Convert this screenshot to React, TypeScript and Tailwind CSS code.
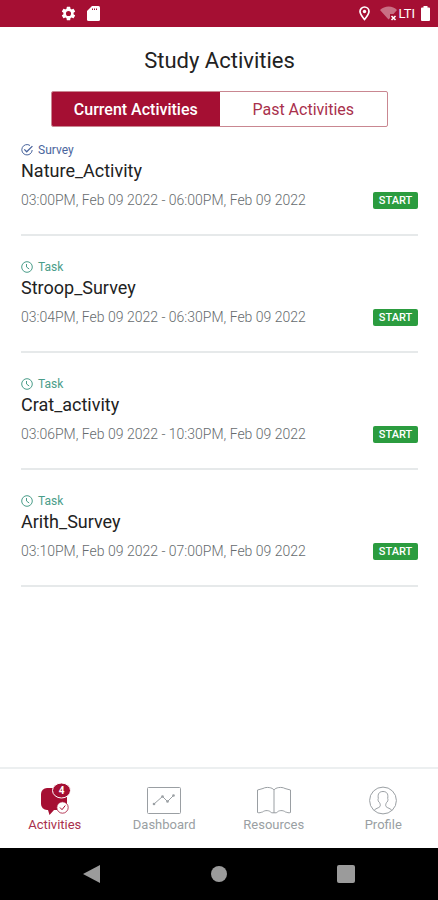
import { useState } from "react"

type Activity = {
  id: number
  kind: "Survey" | "Task"
  name: string
  period: string
}

const ACTIVITIES: Activity[] = [
  { id: 1, kind: "Survey", name: "Nature_Activity", period: "03:00PM, Feb 09 2022 - 06:00PM, Feb 09 2022" },
  { id: 2, kind: "Task", name: "Stroop_Survey", period: "03:04PM, Feb 09 2022 - 06:30PM, Feb 09 2022" },
  { id: 3, kind: "Task", name: "Crat_activity", period: "03:06PM, Feb 09 2022 - 10:30PM, Feb 09 2022" },
  { id: 4, kind: "Task", name: "Arith_Survey", period: "03:10PM, Feb 09 2022 - 07:00PM, Feb 09 2022" },
]

const TABS = ["Current Activities", "Past Activities"]

function StatusBar() {
  return (
    <div className="h-[27px] bg-[#a50f33] flex items-center justify-between text-white">
      <div className="flex items-center gap-[10px] pl-[60px]">
        <svg className="w-[17px] h-[17px]" viewBox="0 0 24 24" fill="currentColor">
          <path d="M19.14 12.94c.04-.3.06-.61.06-.94s-.02-.64-.07-.94l2.03-1.58a.49.49 0 0 0 .12-.61l-1.92-3.32a.49.49 0 0 0-.59-.22l-2.39.96a7 7 0 0 0-1.62-.94l-.36-2.54A.48.48 0 0 0 13.92 2.4h-3.84a.48.48 0 0 0-.48.41l-.36 2.54c-.59.24-1.13.57-1.62.94l-2.39-.96a.49.49 0 0 0-.59.22L2.72 8.87c-.12.21-.08.47.12.61l2.03 1.58c-.05.3-.07.62-.07.94s.02.64.07.94l-2.03 1.58a.49.49 0 0 0-.12.61l1.92 3.32c.12.22.37.29.59.22l2.39-.96c.5.38 1.03.7 1.62.94l.36 2.54c.05.24.24.41.48.41h3.84c.24 0 .44-.17.47-.41l.36-2.54a7 7 0 0 0 1.62-.94l2.39.96c.22.08.47 0 .59-.22l1.92-3.32a.49.49 0 0 0-.12-.61zM12 15.6a3.6 3.6 0 1 1 0-7.2 3.6 3.6 0 0 1 0 7.2z" />
        </svg>
        <svg className="w-[13px] h-[15px]" viewBox="0 0 13 15">
          <path d="M5 0h6.5A1.5 1.5 0 0 1 13 1.5v12a1.5 1.5 0 0 1-1.5 1.5h-10A1.5 1.5 0 0 1 0 13.5V5z" fill="currentColor" />
          <path d="M5.5 2.5V4M7.5 2.5V4M9.5 2.5V4" stroke="#a50f33" strokeWidth="1" />
        </svg>
      </div>
      <div className="flex items-center pr-2">
        <svg className="w-[11px] h-[15px] mr-[10px]" viewBox="0 0 11 15" fill="none" stroke="currentColor">
          <path d="M5.5 13.5C3 10.500 1 8 1 5.500a4.500 4.500 0 0 1 9 0c0 2.500-2 5-4.500 8z" strokeWidth="1.700" />
          <circle cx="5.500" cy="5.500" r="1.700" fill="currentColor" stroke="none" />
        </svg>
        <svg className="w-[18px] h-[15px]" viewBox="0 0 18 15">
          <path d="M0 4C4.500-.7 13-.7 17 4l-3.500 4H10v4l-1.500 1.500z" fill="#fff" opacity=".4" />
          <path d="m11.500 10 4 4m0-4-4 4" stroke="#fff" strokeWidth="1.600" />
        </svg>
        <span className="text-[13px] leading-4 mr-1.5">LTI</span>
        <svg className="w-[9px] h-[15px]" viewBox="0 0 9 15" fill="currentColor">
          <path d="M2.500 0h4v1.500H8a1 1 0 0 1 1 1V14a1 1 0 0 1-1 1H1a1 1 0 0 1-1-1V2.500a1 1 0 0 1 1-1h1.500z" />
        </svg>
      </div>
    </div>
  )
}

function KindIcon({ kind }: { kind: Activity["kind"] }) {
  if (kind === "Survey") {
    return (
      <svg className="w-3 h-3" viewBox="0 0 12 12" fill="none" stroke="currentColor">
        <path d="M9 1.500A5.200 5.200 0 1 0 11.200 6" />
        <path d="m3.300 5.400 2.400 2.400 5.700-5.700" strokeWidth="1.300" />
      </svg>
    )
  }
  return (
    <svg className="w-3 h-3" viewBox="0 0 12 12" fill="none" stroke="currentColor">
      <circle cx="6" cy="6" r="5.300" />
      <path d="M5.500 3v3l2.700 2" />
    </svg>
  )
}

function ActivityRow({ activity }: { activity: Activity }) {
  return (
    <li className="border-b-2 border-[#e6e9ea] pb-[25px]">
      <div className={`flex items-center gap-[5px] text-xs ${activity.kind === "Survey" ? "text-[#4a659d]" : "text-[#4a9d89]"}`}>
        <KindIcon kind={activity.kind} />
        <span>{activity.kind}</span>
      </div>
      <h2 className="mt-0.5 text-[18px] leading-[22px] text-[#222]">{activity.name}</h2>
      <div className="mt-[9px] flex items-center justify-between">
        <p className="text-[14px] leading-[18px] font-light text-[#666b6e]">{activity.period}</p>
        <button className="w-[45px] h-[17px] rounded-xs bg-[#2b9c3f] text-white text-[11px] leading-[17px] font-medium">
          START
        </button>
      </div>
    </li>
  )
}

function ActivitiesIcon() {
  return (
    <svg className="w-8 h-8" viewBox="0 0 32 32">
      <path d="M8 5h14a6 6 0 0 1 6 6v10a6 6 0 0 1-6 6h-7l-4.500 5L9 27H8a6 6 0 0 1-6-6V11a6 6 0 0 1 6-6z" fill="#a50f33" />
      <ellipse cx="22.500" cy="7.500" rx="9" ry="7.500" fill="#a50f33" stroke="#fff" />
      <text x="22.500" y="11" textAnchor="middle" fill="#fff" fontSize="10" fontWeight="700">4</text>
      <circle cx="23.500" cy="24.500" r="5.700" fill="#fff" stroke="#a50f33" strokeWidth=".8" />
      <path d="m21 24.500 2 2.200 3.300-4.200" fill="none" stroke="#a50f33" />
    </svg>
  )
}

function DashboardIcon() {
  return (
    <svg className="w-[34px] h-8" viewBox="0 0 34 32" fill="none" stroke="currentColor">
      <rect x=".5" y="4.500" width="33" height="26" rx="1" />
      <path d="m7 21 8.500-7.500 5 5 6-6" />
      <g fill="currentColor" stroke="none">
        <circle cx="7" cy="21" r="1.300" />
        <circle cx="15.500" cy="13.500" r="1.300" />
        <circle cx="20.500" cy="18.500" r="1.300" />
        <circle cx="26.500" cy="12.500" r="1.300" />
      </g>
    </svg>
  )
}

function ResourcesIcon() {
  return (
    <svg className="w-[34px] h-8" viewBox="0 0 34 32" fill="none" stroke="currentColor">
      <path d="M17 7C15.500 4.500 9.500 3.500 6 5.500L.5 7v22.500c2 .8 3.200-.2 5-.5 2.500-2 7-2 9 .8h5c2-2.800 6.500-2.800 9-.8 1.800.3 3 1.300 5 .5V7L28 5.500C24.500 3.500 18.500 4.500 17 7z" />
      <path d="M17 7v23" />
    </svg>
  )
}

function ProfileIcon() {
  return (
    <svg className="w-7 h-8" viewBox="0 0 28 32" fill="none" stroke="currentColor">
      <circle cx="14" cy="17.500" r="13.400" />
      <path d="M5 27.500c1-2 5-2.500 6-4 .6-1 .3-2.500-.5-4-1 0-2-3.500-1.200-4C8.500 10.500 10.500 8.500 14 8.500s5.500 2 4.700 7c.8.500-.2 4-1.200 4-.8 1.500-1.100 3-.5 4 1 1.500 5 2 6 4" />
    </svg>
  )
}

const NAV_ITEMS = [
  { label: "Activities", icon: <ActivitiesIcon /> },
  { label: "Dashboard", icon: <DashboardIcon /> },
  { label: "Resources", icon: <ResourcesIcon /> },
  { label: "Profile", icon: <ProfileIcon /> },
]

export default function App() {
  const [tab, setTab] = useState(TABS[0])

  return (
    <div className="min-h-screen flex flex-col bg-white font-['Roboto',sans-serif]">
      <StatusBar />

      <main className="flex-1 pl-[21px] pr-5">
        <h1 className="pt-5 text-center text-[22px] leading-7 text-[#222]">Study Activities</h1>

        <div className="mt-4 mx-[30px] h-9 flex rounded-xs border border-[#c98791] overflow-hidden">
          {TABS.map(t => (
            <button
              key={t}
              onClick={() => setTab(t)}
              className={`flex-1 pt-0.5 text-[16px] leading-5 ${t === tab ? "bg-[#a50f33] text-white font-medium" : "text-[#a9304c]"}`}
            >
              {t}
            </button>
          ))}
        </div>

        <ul className="pt-[15px] flex flex-col gap-[23px]">
          {ACTIVITIES.map(a => (
            <ActivityRow key={a.id} activity={a} />
          ))}
        </ul>
      </main>

      <nav className="h-[81px] border-t-2 border-[#eceff0] flex">
        {NAV_ITEMS.map((item, i) => (
          <a
            key={item.label}
            href="#"
            className={`flex-1 pt-3.5 flex flex-col items-center text-[13px] leading-4 ${i === 0 ? "text-[#a9304c]" : "text-[#9a9fa3]"}`}
          >
            {item.icon}
            <span className="mt-0.5">{item.label}</span>
          </a>
        ))}
      </nav>

      {/* system buttons */}
      <div className="h-[52px] bg-black px-7 grid grid-cols-3 place-items-center">
        <button aria-label="Back">
          <svg className="w-[17px] h-[18px]" viewBox="0 0 17 18" fill="#9b9b9b"><path d="M17 0v18L0 9z" /></svg>
        </button>
        <button aria-label="Home" className="w-4 h-4 rounded-full bg-[#9b9b9b]" />
        <button aria-label="Recent apps" className="w-[18px] h-[18px] rounded-xs bg-[#9b9b9b]" />
      </div>
    </div>
  )
}
